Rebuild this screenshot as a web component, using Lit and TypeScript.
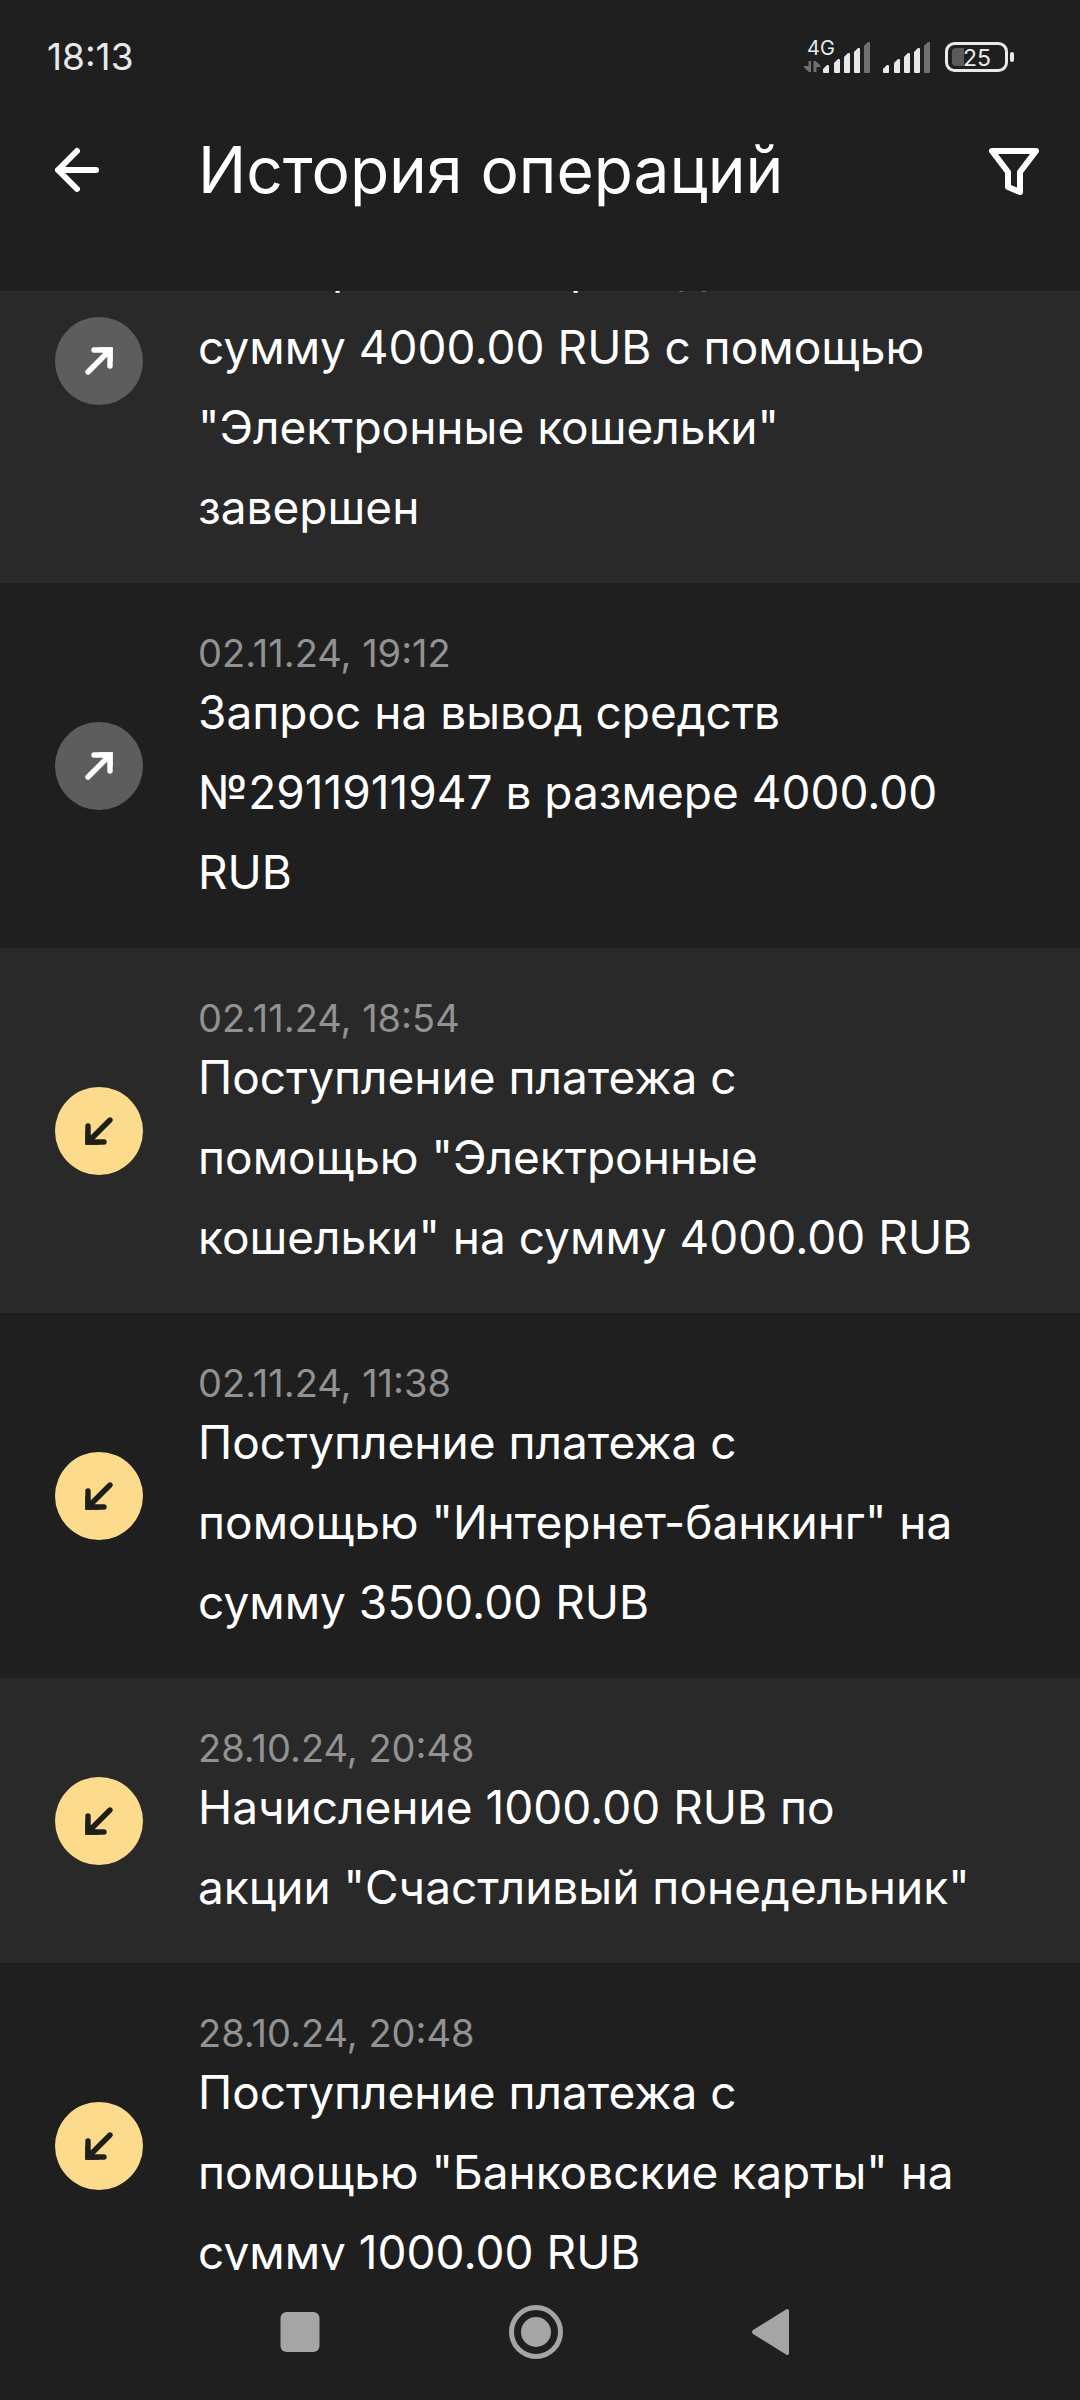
import { LitElement, html, svg, css } from "lit";
import { customElement, property, query } from "lit/decorators.js";
import { classMap } from "lit/directives/class-map.js";

type Direction = "in" | "out";

interface Operation {
  date: string;
  text: string;
  direction: Direction;
}

const OPERATIONS: Operation[] = [
  {
    date: "02.11.24, 19:12",
    text: 'Электронный перевод на\nсумму 4000.00 RUB с помощью\n"Электронные кошельки"\nзавершен',
    direction: "out",
  },
  {
    date: "02.11.24, 19:12",
    text: "Запрос на вывод средств\n№2911911947 в размере 4000.00\nRUB",
    direction: "out",
  },
  {
    date: "02.11.24, 18:54",
    text: 'Поступление платежа с\nпомощью "Электронные\nкошельки" на сумму 4000.00 RUB',
    direction: "in",
  },
  {
    date: "02.11.24, 11:38",
    text: 'Поступление платежа с\nпомощью "Интернет-банкинг" на\nсумму 3500.00 RUB',
    direction: "in",
  },
  {
    date: "28.10.24, 20:48",
    text: 'Начисление 1000.00 RUB по\nакции "Счастливый понедельник"',
    direction: "in",
  },
  {
    date: "28.10.24, 20:48",
    text: 'Поступление платежа с\nпомощью "Банковские карты" на\nсумму 1000.00 RUB',
    direction: "in",
  },
];

@customElement("status-bar")
export class StatusBar extends LitElement {
  static styles = css`
    :host {
      display: flex;
      align-items: center;
      justify-content: space-between;
      height: 114px;
      padding: 0 64px 0 47px;
      color: #e9e9e9;
    }
    .time {
      font-size: 37px;
      line-height: 40px;
    }
    .icons {
      display: block;
      width: 212px;
      height: 40px;
    }
    .network {
      font-size: 20px;
    }
    .charge {
      font-size: 23px;
    }
  `;

  /* Five slanted bars, the last one unlit. */
  private signal(x: number) {
    return [8, 14, 20, 25, 31].map((h, i) => {
      const left = x + i * 10 + (i ? 1 : 0);
      const top = 73 - h;
      return svg`<path
        fill=${i === 4 ? "#707070" : "#e9e9e9"}
        d="M${left} ${top + 4}L${left + 4} ${top}H${left + 5}Q${left + 6} ${top} ${left + 6} ${top + 1}V72Q${left + 6} 73 ${left + 5} 73H${left + 1}Q${left} 73 ${left} 72Z"
      />`;
    });
  }

  render() {
    return html`
      <time class="time">18:13</time>
      <svg class="icons" viewBox="804 37 212 40" aria-hidden="true">
        <text class="network" x="807" y="55" fill="#e9e9e9">4G</text>
        <path fill="#707070" d="M808.500 61H811V72H809L804 67.500V66H808.500ZM813.500 72V61H815.500L820.500 65.500V67H816.500V72Z" />
        ${this.signal(823)} ${this.signal(883)}
        <rect x="946.500" y="43.500" width="60" height="27" rx="8" fill="none" stroke="#e9e9e9" stroke-width="3" />
        <path fill="#5a5a5a" d="M964 48V66H956Q952 66 952 62V52Q952 48 956 48Z" />
        <text class="charge" x="963" y="66" fill="#e9e9e9">25</text>
        <rect x="1010" y="52" width="4" height="10" rx="2" fill="#e9e9e9" />
      </svg>
    `;
  }
}

@customElement("page-header")
export class PageHeader extends LitElement {
  static styles = css`
    :host {
      display: flex;
      align-items: center;
      gap: 55px;
      padding: 0 36px 65px 55px;
    }
    .title {
      flex: 1;
      margin: 0;
      font-size: 64px;
      font-weight: 400;
      line-height: 112px;
    }
    .button {
      display: flex;
      align-items: center;
      height: 88px;
      padding: 0;
      border: 0;
      background: none;
      color: inherit;
      cursor: pointer;
    }
    .back {
      width: 88px;
    }
    .icon {
      width: 56px;
      height: 56px;
      fill: none;
      stroke: currentColor;
      stroke-width: 6;
      stroke-linecap: round;
      stroke-linejoin: round;
    }
    .back .icon {
      width: 44px;
    }
  `;

  render() {
    return html`
      <button class="button back" type="button" aria-label="Назад">
        <svg class="icon" viewBox="0 0 44 56" aria-hidden="true">
          <path d="M41 28H3M22 9L3 28L22 47" />
        </svg>
      </button>
      <h1 class="title">История операций</h1>
      <button class="button" type="button" aria-label="Фильтр">
        <svg class="icon" viewBox="0 0 56 56" aria-hidden="true">
          <path d="M4 9H48L32 30V50L20 45V30Z" />
        </svg>
      </button>
    `;
  }
}

@customElement("operation-row")
export class OperationRow extends LitElement {
  @property({ attribute: false }) operation!: Operation;

  static styles = css`
    :host {
      display: flex;
      align-items: center;
      gap: 55px;
      padding: 0 48px 0 55px;
    }
    .badge {
      flex: none;
      width: 88px;
      height: 88px;
      border-radius: 50%;
      background: #5d5d5d;
      color: #ffffff;
    }
    .badge.in {
      background: #fcdc8c;
      color: #1f1f1a;
    }
    .arrow {
      display: block;
      fill: none;
      stroke: currentColor;
      stroke-width: 5.4;
      stroke-linecap: round;
    }
    .body {
      flex: 1;
      padding: 51px 0 36px;
    }
    .date {
      display: block;
      font-size: 38px;
      line-height: 38px;
      color: #929292;
    }
    .text {
      margin: 0;
      font-size: 46px;
      line-height: 80px;
      white-space: pre-line;
    }
  `;

  render() {
    const { date, text, direction } = this.operation;
    const path = direction === "in" ? "M55 33L33 55M33 39V55H49" : "M33 55L55 33M39 33H55V49";
    const corner = direction === "in" ? "M33 50V55H38Z" : "M50 33H55V38Z";
    return html`
      <div class=${classMap({ badge: true, in: direction === "in" })}>
        <svg class="arrow" viewBox="0 0 88 88" aria-hidden="true">
          <path d=${path} />
          <path d=${corner} />
        </svg>
      </div>
      <div class="body">
        <time class="date">${date}</time>
        <p class="text">${text}</p>
      </div>
    `;
  }
}

@customElement("system-nav")
export class SystemNav extends LitElement {
  static styles = css`
    :host {
      display: flex;
      align-items: center;
      justify-content: center;
      height: 124px;
      padding: 0 8px 6px 0;
      color: #a5a5a5;
    }
    .button {
      display: flex;
      justify-content: center;
      width: 236px;
      padding: 0;
      border: 0;
      background: none;
      color: inherit;
    }
    .icon {
      width: 56px;
      height: 56px;
      fill: currentColor;
    }
  `;

  render() {
    return html`
      <button class="button" type="button" aria-label="Недавние">
        <svg class="icon" viewBox="0 0 56 56" aria-hidden="true">
          <rect x="8.500" y="8" width="39" height="40" rx="6" />
        </svg>
      </button>
      <button class="button" type="button" aria-label="Домой">
        <svg class="icon" viewBox="0 0 56 56" aria-hidden="true">
          <circle cx="28" cy="28" r="24.500" fill="none" stroke="currentColor" stroke-width="5" />
          <circle cx="28" cy="28" r="15" />
        </svg>
      </button>
      <button class="button" type="button" aria-label="Назад">
        <svg class="icon" viewBox="0 0 56 56" aria-hidden="true">
          <path d="M9 26L42 5.500Q45 4 45 7V49Q45 52 42 50.500L9 30Q7 28 9 26Z" />
        </svg>
      </button>
    `;
  }
}

@customElement("app-root")
export class AppRoot extends LitElement {
  @query(".list") private list!: HTMLElement;

  static styles = css`
    :host {
      display: flex;
      flex-direction: column;
      height: 100vh;
      background: #1f1f1f;
      color: #ffffff;
      font-family: Inter, Roboto, "Noto Sans", sans-serif;
    }
    .list {
      flex: 1;
      min-height: 0;
      margin: 0;
      padding: 0;
      list-style: none;
      overflow-y: auto;
      scrollbar-width: none;
    }
    .item:nth-child(odd) {
      background: #292929;
    }
  `;

  /* The list opens scrolled part of the way into its first operation. */
  async firstUpdated() {
    const rows = [...this.renderRoot.querySelectorAll<OperationRow>("operation-row")];
    await Promise.all(rows.map((row) => row.updateComplete));
    this.list.scrollTop = 153;
  }

  render() {
    return html`
      <status-bar></status-bar>
      <page-header></page-header>
      <ul class="list">
        ${OPERATIONS.map(
          (operation) => html`<li class="item"><operation-row .operation=${operation}></operation-row></li>`,
        )}
      </ul>
      <system-nav></system-nav>
    `;
  }
}
